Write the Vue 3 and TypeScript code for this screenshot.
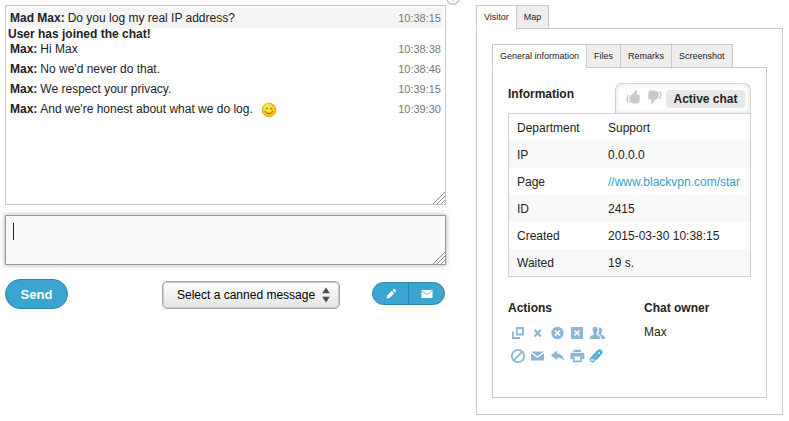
<script setup lang="ts">
import { ref } from 'vue'

interface Message {
  author?: string
  text: string
  time?: string
  smile?: boolean
}

interface Detail {
  label: string
  value: string
  href?: string
}

const messages: Message[] = [
  { author: 'Mad Max:', text: 'Do you log my real IP address?', time: '10:38:15' },
  { text: 'User has joined the chat!' },
  { author: 'Max:', text: 'Hi Max', time: '10:38:38' },
  { author: 'Max:', text: "No we'd never do that.", time: '10:38:46' },
  { author: 'Max:', text: 'We respect your privacy.', time: '10:39:15' },
  { author: 'Max:', text: "And we're honest about what we do log.", time: '10:39:30', smile: true },
]

const details: Detail[] = [
  { label: 'Department', value: 'Support' },
  { label: 'IP', value: '0.0.0.0' },
  { label: 'Page', value: '//www.blackvpn.com/star', href: '#page' },
  { label: 'ID', value: '2415' },
  { label: 'Created', value: '2015-03-30 10:38:15' },
  { label: 'Waited', value: '19 s.' },
]

const outerTabs = ['Visitor', 'Map']
const innerTabs = ['General information', 'Files', 'Remarks', 'Screenshot']
const outerTab = ref('Visitor')
const innerTab = ref('General information')

const draft = ref('')
const canned = ref('')
</script>

<template>
  <main class="page">
    <section class="chat">
      <svg class="corner-mark" viewBox="0 0 16 16" aria-hidden="true">
        <circle cx="8" cy="8" r="6.2" fill="none" stroke="#c4c4c4" stroke-width="1.6" />
        <path d="M8 6v6" stroke="#d4d4d4" stroke-width="1.6" />
      </svg>

      <div class="log">
        <template v-for="(m, i) in messages" :key="i">
          <div v-if="m.author" class="message" :class="{ shaded: i === 0 }">
            <span class="body">
              <b>{{ m.author }}</b> {{ m.text }}
              <svg v-if="m.smile" class="smile" viewBox="0 0 16 16" role="img" aria-label="Smile">
                <circle cx="8" cy="8" r="6.8" fill="#f4cc16" stroke="#d9a81b" stroke-width="1" />
                <circle cx="7" cy="5.8" r="4.2" fill="#fdec6a" opacity="0.7" />
                <ellipse cx="5.9" cy="6.4" rx="0.7" ry="1" fill="#6b4d05" />
                <ellipse cx="10.1" cy="6.4" rx="0.7" ry="1" fill="#6b4d05" />
                <path d="M4 9c1 3.4 7 3.4 8 0" fill="none" stroke="#8a6408" stroke-width="1" />
              </svg>
            </span>
            <time>{{ m.time }}</time>
          </div>
          <div v-else class="notice">{{ m.text }}</div>
        </template>
        <svg class="grip" viewBox="0 0 13 13" aria-hidden="true">
          <path d="M1 13L13 1M5 13L13 5M9 13L13 9" />
        </svg>
      </div>

      <div class="composer">
        <textarea v-model="draft" aria-label="Message"></textarea>
        <span v-if="!draft" class="caret"></span>
        <svg class="grip" viewBox="0 0 13 13" aria-hidden="true">
          <path d="M1 13L13 1M5 13L13 5M9 13L13 9" />
        </svg>
      </div>

      <div class="toolbar">
        <button type="button" class="send">Send</button>
        <div class="picker">
          <select v-model="canned" aria-label="Canned message">
            <option value="">Select a canned message</option>
          </select>
          <svg viewBox="0 0 8 16" aria-hidden="true">
            <path d="M4 0.5L7.8 6.2H0.2zM4 15.5L0.2 9.8H7.8z" fill="#4c4c4c" />
          </svg>
        </div>
        <div class="pair">
          <button type="button" aria-label="Edit">
            <svg viewBox="0 0 12 12" aria-hidden="true">
              <path d="M1.5 10.5l.6-3.1 4.7-4.7 2.5 2.5-4.7 4.7zM7.5 2l.8-.8q.7-.6 1.4 0l1.1 1.1q.6.7 0 1.4l-.8.8z" fill="#fff" />
            </svg>
          </button>
          <button type="button" aria-label="Mail">
            <svg viewBox="0 0 12 12" aria-hidden="true">
              <rect x="0.5" y="2" width="11" height="8" rx="0.6" fill="#fff" />
              <path d="M1 3l5 3.6L11 3" fill="none" stroke="#7fbfdd" stroke-width="1" />
            </svg>
          </button>
        </div>
      </div>
    </section>

    <section class="side">
      <div class="tabs">
        <button
          v-for="t in outerTabs"
          :key="t"
          type="button"
          class="tab"
          :class="{ current: t === outerTab }"
          @click="outerTab = t"
        >{{ t }}</button>
      </div>
      <div class="panel outer">
        <div class="tabs">
          <button
            v-for="t in innerTabs"
            :key="t"
            type="button"
            class="tab"
            :class="{ current: t === innerTab }"
            @click="innerTab = t"
          >{{ t }}</button>
        </div>
        <div class="panel inner">
          <header class="info-head">
            <h2>Information</h2>
            <div class="status">
              <svg class="thumb" viewBox="0 0 14 14" aria-hidden="true">
                <path d="M1.2 5Q-.4 8.500 1.200 12.700L2.600 12.700Q1.300 8.500 2.600 5z" fill="#cacaca" />
                <path d="M3.600 6L6.600 4Q8.600 2.500 9 .4q2.200-.4 2.100 1.800L10.700 4.500H12.800q1.300.3.900 1.800l-.2 5q-.2 2-2 2.200H7.500L3.600 12.300q-.9-3 0-6.300z" fill="#cacaca" />
              </svg>
              <svg class="thumb flipped" viewBox="0 0 14 14" aria-hidden="true">
                <path d="M1.2 5Q-.4 8.500 1.200 12.700L2.600 12.700Q1.300 8.500 2.600 5z" fill="#cacaca" />
                <path d="M3.600 6L6.600 4Q8.600 2.500 9 .4q2.200-.4 2.100 1.800L10.700 4.500H12.800q1.300.3.900 1.800l-.2 5q-.2 2-2 2.200H7.500L3.600 12.300q-.9-3 0-6.300z" fill="#cacaca" />
              </svg>
              <strong>Active chat</strong>
            </div>
          </header>

          <table>
            <tbody>
              <tr v-for="d in details" :key="d.label">
                <th scope="row">{{ d.label }}</th>
                <td>
                  <div class="clip">
                    <a v-if="d.href" :href="d.href">{{ d.value }}</a>
                    <template v-else>{{ d.value }}</template>
                  </div>
                </td>
              </tr>
            </tbody>
          </table>

          <div class="foot">
            <div>
              <h2>Actions</h2>
              <div class="actions">
                <button type="button" aria-label="Open in window">
                  <svg viewBox="0 0 16 16">
                    <path d="M6.800 3h6.200v6.500H6.800z" fill="none" stroke="currentColor" stroke-width="1.800" />
                    <path d="M2 6.500h1.900v5.600H10v1.900H2z" fill="currentColor" />
                  </svg>
                </button>
                <button type="button" aria-label="Close">
                  <svg viewBox="0 0 16 16">
                    <path d="M4.500 4.800l6.400 6.800M10.900 4.800l-6.400 6.800" stroke="currentColor" stroke-width="2.200" />
                  </svg>
                </button>
                <button type="button" aria-label="End chat">
                  <svg viewBox="0 0 16 16">
                    <circle cx="7.500" cy="8" r="6.200" fill="currentColor" />
                    <path d="M5 5.500l5 5M10 5.500l-5 5" stroke="#fff" stroke-width="1.700" />
                  </svg>
                </button>
                <button type="button" aria-label="Remove">
                  <svg viewBox="0 0 16 16">
                    <rect x="1" y="2" width="12" height="12" fill="currentColor" />
                    <path d="M4.500 5.500l5 5M9.500 5.500l-5 5" stroke="#fff" stroke-width="1.700" />
                  </svg>
                </button>
                <button type="button" aria-label="Transfer">
                  <svg viewBox="0 0 16 16">
                    <path d="M2.500 4Q2.700 1.500 5 1.500T7.700 4.300Q7.700 6.800 6.600 8v1.800q3.400 1 3.400 2.500V14H0v-1.700Q0 10.800 3.600 9.800V8Q2.400 6.500 2.500 4z" fill="currentColor" />
                    <path d="M8.700 2.800Q11.600 1.800 12.100 4.500 12.400 7 11.200 8.300v1.500q3.700 1 3.700 2.500V14H11.100v-2.200Q10.900 10.200 8.400 9.200L8.200 8.500Q9.700 6 8.700 2.800z" fill="currentColor" />
                  </svg>
                </button>
                <button type="button" aria-label="Block">
                  <svg viewBox="0 0 16 16">
                    <circle cx="8" cy="8" r="6.200" fill="none" stroke="currentColor" stroke-width="1.800" />
                    <path d="M3.800 12.200l8.400-8.400" stroke="currentColor" stroke-width="1.700" />
                  </svg>
                </button>
                <button type="button" aria-label="Send mail">
                  <svg viewBox="0 0 16 16">
                    <path d="M1 3.500h13L7.500 8.300zM1 5.200L7.500 10l6.500-4.800V12.500H1z" fill="currentColor" />
                  </svg>
                </button>
                <button type="button" aria-label="Redirect">
                  <svg viewBox="0 0 16 16">
                    <path d="M.8 7.300l6.400-4.800v2.900q6.200.6 7 7.600Q12 9.800 7.200 9.600V12z" fill="currentColor" />
                  </svg>
                </button>
                <button type="button" aria-label="Print">
                  <svg viewBox="0 0 16 16">
                    <path d="M3.500 1.800h7.500v2.200H3.500zM.3 6q0-1.200 1.200-1.200h11.600q1.200 0 1.200 1.200v5.200h-2.800V8.600H3.100v2.600H.3z" fill="currentColor" />
                    <path d="M3.800 8.600v4.700h7V8.600" fill="none" stroke="currentColor" stroke-width="1.700" />
                  </svg>
                </button>
                <button type="button" class="clip-button" aria-label="Attach file">
                  <svg viewBox="0 0 16 16">
                    <path d="M1.600 11.200l6.800-7.400q1-1 1.900-.2.800.9-.1 2L3.700 13q-1.500 1.500-3 .2-1.200-1.400.1-3L7.500 3q2-2 3.700-.6 1.500 1.600-.1 3.600L6 11.600M3.200 11.500L8.500 5.700" fill="none" stroke="currentColor" stroke-width="1.100" />
                  </svg>
                </button>
              </div>
            </div>
            <div>
              <h2>Chat owner</h2>
              <p>Max</p>
            </div>
          </div>
        </div>
      </div>
    </section>
  </main>
</template>

<style>
body {
  margin: 0;
  background: #fff;
}
</style>

<style scoped>
* {
  box-sizing: border-box;
}

.page {
  display: grid;
  grid-template-columns: 441fr 307fr;
  gap: 30px;
  padding: 5px 6px 6px 5px;
  font: 12px/20px "Liberation Sans", Arial, sans-serif;
  color: #222;
}

button,
select,
textarea {
  font: inherit;
  margin: 0;
}

button {
  padding: 0;
  cursor: pointer;
}

svg {
  display: block;
  overflow: visible;
}

.chat {
  position: relative;
  min-width: 0;
}

.corner-mark {
  position: absolute;
  top: -15px;
  right: -15px;
  width: 16px;
  height: 16px;
}

.log {
  position: relative;
  height: 200px;
  padding: 2px;
  border: 1px solid #c9c9c9;
}

.message {
  display: flex;
  justify-content: space-between;
  height: 20px;
  padding: 0 2px;
}

.shaded {
  background: #f4f4f4;
}

.body {
  display: flex;
  gap: 3px;
}

.notice {
  height: 11px;
  line-height: 13px;
  font-weight: bold;
}

time {
  font-size: 11px;
  color: #777;
}

.smile {
  width: 16px;
  height: 16px;
  margin: 3px 0 0 5px;
}

.grip {
  position: absolute;
  right: 0;
  bottom: 0;
  width: 13px;
  height: 13px;
  overflow: hidden;
  fill: none;
  stroke: #8c8c8c;
  stroke-width: 1;
  pointer-events: none;
}

.composer {
  position: relative;
  height: 50px;
  margin-top: 10px;
}

.composer .grip {
  right: 1px;
  bottom: 1px;
}

textarea {
  display: block;
  width: 100%;
  height: 100%;
  padding: 7px;
  border: 1px solid #999;
  border-radius: 0;
  background: #fafafa;
  box-shadow: 0 0 5px #aaa;
  outline: none;
  resize: none;
  color: #222;
}

.caret {
  position: absolute;
  left: 8px;
  top: 8px;
  width: 1px;
  height: 17px;
  background: #222;
  pointer-events: none;
}

.toolbar {
  display: flex;
  align-items: flex-start;
  margin-top: 14px;
  padding-right: 1px;
}

.send {
  width: 63px;
  height: 30px;
  padding-top: 2px;
  border: 1px solid #2d87ab;
  border-radius: 15px;
  background: #3ba4d0;
  color: #fff;
  font-size: 13px;
  font-weight: bold;
}

.picker {
  position: relative;
  width: 178px;
  margin: 2px 32px 0 auto;
}

.picker select {
  appearance: none;
  display: block;
  width: 100%;
  height: 28px;
  padding: 0 23px 0 14px;
  border: 1px solid #a4a4a4;
  border-radius: 5px;
  background: linear-gradient(#fff, #e4e4e4);
  box-shadow: inset 0 0 1px 1px #ccc;
  color: #000;
}

.picker svg {
  position: absolute;
  right: 10px;
  top: 6px;
  width: 8px;
  height: 16px;
  pointer-events: none;
}

.pair {
  display: flex;
  width: 73px;
  height: 23px;
  margin-top: 3px;
  border: 1px solid #2d87ab;
  border-radius: 12px;
  background: #3ba4d0;
  overflow: hidden;
}

.pair button {
  display: flex;
  flex: 1;
  align-items: center;
  justify-content: center;
  border: 0;
  background: none;
}

.pair button + button {
  border-left: 1px solid #2d87ab;
}

.pair svg {
  width: 12px;
  height: 12px;
}

.side {
  min-width: 0;
}

.tabs {
  display: flex;
}

.tab {
  position: relative;
  height: 24px;
  padding: 0 7px;
  border: 1px solid #c9c9c9;
  background: #eee;
  color: #222;
  font-size: 9px;
  white-space: nowrap;
}

.tab + .tab {
  margin-left: -1px;
}

.tab.current {
  border-bottom-color: #fff;
  background: #fff;
}

.panel {
  margin-top: -1px;
  border: 1px solid #c9c9c9;
}

.outer {
  padding: 15px 15px 16px;
}

.inner {
  padding: 15px 15px 30px;
}

.info-head {
  display: flex;
  justify-content: space-between;
  height: 30px;
}

h2 {
  margin: 0;
  font-size: 12px;
  font-weight: bold;
}

.info-head h2 {
  line-height: 22px;
}

.status {
  display: flex;
  gap: 8px;
  width: 136px;
  padding: 6px 5px 0 10px;
  border: 1px solid #d2d2d2;
  border-bottom: 0;
  border-radius: 7px 7px 0 0;
  box-shadow: inset 0 0 5px #ddd;
}

.thumb {
  flex: none;
  width: 14px;
  height: 14px;
}

.flipped {
  transform: rotate(180deg);
}

.status strong {
  flex: 1;
  height: 18px;
  margin-left: -4px;
  border-radius: 3px;
  background: #e8e8e8;
  line-height: 18px;
  text-align: center;
  white-space: nowrap;
}

table {
  width: 100%;
  border: 1px solid #d2d2d2;
  border-collapse: separate;
  border-spacing: 0;
  table-layout: fixed;
}

th,
td {
  height: 27px;
  padding: 0 8px;
  font-weight: normal;
  text-align: left;
}

th {
  width: 91px;
}

tr:nth-child(even) {
  background: #f8f8f8;
}

.clip {
  overflow: hidden;
  white-space: nowrap;
}

a {
  color: #2f9fcb;
  text-decoration: none;
}

.foot {
  display: grid;
  grid-template-columns: 136px 1fr;
  margin-top: 21px;
}

.foot p {
  margin: 4px 0 0;
}

.actions {
  display: grid;
  grid-template-columns: repeat(5, 20px);
  grid-auto-rows: 23px;
  margin-top: 3px;
}

.actions button {
  display: flex;
  align-items: center;
  justify-content: center;
  border: 0;
  background: none;
  color: #8cb7d3;
}

.actions .clip-button {
  color: #3fa5d3;
}

.actions svg {
  width: 16px;
  height: 16px;
}
</style>
